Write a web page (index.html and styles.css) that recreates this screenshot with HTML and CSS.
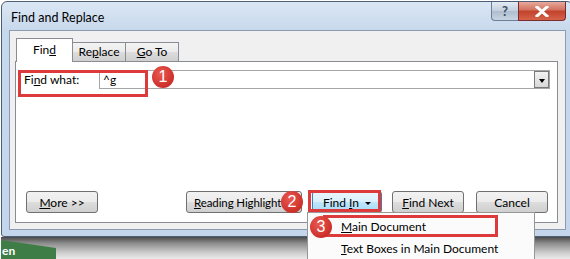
FILE: index.html
```html
<!DOCTYPE html>
<html>
<head>
    <meta charset="UTF-8">
    <title>Find and Replace</title>
    <link rel="stylesheet" href="styles.css">
</head>
<body>
    <div class="stage">
        <!-- Dialog window -->
        <div class="window">
            <div class="titlebar">
                <span class="title">Find and Replace</span>
                <div class="caption-buttons">
                    <span class="cap help">?</span>
                    <span class="cap close">
                        <svg width="14" height="11" viewBox="0 0 14 11">
                            <path d="M2 1 L12 10 M12 1 L2 10" stroke="#fff" stroke-width="3" stroke-linecap="square"/>
                        </svg>
                    </span>
                </div>
            </div>

            <div class="client">
                <!-- Tabs -->
                <div class="tabs">
                    <span class="tab active">Fin<u>d</u></span>
                    <span class="tab">Re<u>p</u>lace</span>
                    <span class="tab"><u>G</u>o To</span>
                </div>

                <div class="panel">
                    <div class="find-row">
                        <label class="label">Fi<u>n</u>d what:</label>
                        <div class="combo">
                            <span class="combo-text">^g</span>
                            <span class="combo-arrow"></span>
                        </div>
                    </div>

                    <div class="buttons">
                        <button type="button" class="btn more"><u>M</u>ore &gt;&gt;</button>
                        <button type="button" class="btn highlight"><u>R</u>eading Highlight</button>
                        <button type="button" class="btn find-in">Find <u>I</u>n <span class="caret"></span></button>
                        <button type="button" class="btn find-next"><u>F</u>ind Next</button>
                        <button type="button" class="btn cancel">Cancel</button>
                    </div>
                </div>
            </div>
        </div>

        <!-- Area below the dialog -->
        <div class="below">
            <span class="banner">en</span>
        </div>

        <!-- Dropdown menu of Find In -->
        <div class="menu">
            <div class="menu-item"><u>M</u>ain Document</div>
            <div class="menu-item"><u>T</u>ext Boxes in Main Document</div>
        </div>

        <!-- Annotations -->
        <div class="mark mark-find"></div>
        <div class="mark mark-findin"></div>
        <div class="mark mark-main"></div>
        <span class="step step-1">1</span>
        <span class="step step-2">2</span>
        <span class="step step-3">3</span>
    </div>
</body>
</html>
```

FILE: styles.css
```css
/* Find and Replace dialog */
body {
    margin: 0;
    background: #fff;
    font-family: Lato, "Open Sans", sans-serif;
    font-size: 12px;
    color: #000;
}

.stage {
    position: relative;
    width: 570px;
    height: 259px;
    overflow: hidden;
    padding: 1px 0 0 1px;
    box-sizing: border-box;
}

.window {
    width: 572px;
    border: 1px solid #4c5e75;
    border-radius: 6px 6px 3px 3px;
    background: linear-gradient(#dbe7f4, #c6d8ec 30px, #c3d6ec);
    box-sizing: border-box;
}

.titlebar {
    display: flex;
    height: 28px;
}

.title {
    padding: 8px 0 0 9px;
    font-size: 12.5px;
}

.caption-buttons {
    display: flex;
    margin-left: auto;
    margin-right: 6px;
    height: 19px;
}

.cap {
    display: flex;
    align-items: center;
    justify-content: center;
    border: 1px solid #6d7f96;
    border-top: none;
}

.help {
    width: 26px;
    border-radius: 0 0 0 4px;
    border-right: none;
    background: linear-gradient(#e3ebf4, #c3cfdd 50%, #aebdcf 51%, #c7d4e2);
    color: #3d4c60;
    font-weight: bold;
    font-size: 13px;
}

.close {
    width: 46px;
    border-radius: 0 0 4px 0;
    border-color: #7a2b2b;
    background: linear-gradient(#e9a99c, #d0715e 45%, #c2412c 50%, #d5634a);
}

.client {
    margin: 0 6px 6px 7px;
    border: 1px solid #8b9cb2;
    background: #f0f0f0;
    padding: 8px 7px 6px 5px;
    display: flex;
    flex-direction: column;
}

.tabs {
    display: flex;
    align-items: flex-end;
    height: 22px;
    padding-left: 1px;
}

.tab {
    width: 52px;
    height: 18px;
    border: 1px solid #898c95;
    border-bottom: none;
    border-left: none;
    background: linear-gradient(#f3f3f3, #ebebeb 50%, #dddddd 51%, #cfcfcf);
    text-align: center;
    line-height: 18px;
}

.tab.active {
    width: 55px;
    height: 23px;
    border-left: 1px solid #898c95;
    background: #fff;
    line-height: 22px;
    margin-bottom: -1px;
    position: relative;
    z-index: 1;
}

.panel {
    height: 162px;
    border: 1px solid #898c95;
    background: #fff;
    box-sizing: border-box;
    display: flex;
    flex-direction: column;
    justify-content: space-between;
    padding: 8px 7px 9px 8px;
}

.find-row {
    display: flex;
    align-items: center;
    height: 19px;
}

.label {
    width: 75px;
}

.combo {
    flex: 1;
    height: 19px;
    border: 1px solid #a5a5a5;
    box-sizing: border-box;
    display: flex;
    align-items: center;
}

.combo-text {
    flex: 1;
    padding-left: 3px;
}

.combo-arrow {
    width: 15px;
    height: 17px;
    box-sizing: border-box;
    border: 1px solid #7a7a7a;
    background: linear-gradient(#f2f2f2, #d8d8d8);
    position: relative;
}

.combo-arrow::after {
    content: "";
    position: absolute;
    left: 4px;
    top: 7px;
    border-left: 3px solid transparent;
    border-right: 3px solid transparent;
    border-top: 4px solid #000;
}

.buttons {
    display: flex;
    height: 22px;
    padding-left: 2px;
}

.btn {
    height: 22px;
    border: 1px solid #707070;
    border-radius: 3px;
    background: linear-gradient(#f2f2f2, #ebebeb 50%, #dddddd 51%, #cfcfcf);
    font-family: inherit;
    font-size: 12px;
    padding: 0;
    color: #000;
}

.more { width: 72px; }
.highlight {
    width: 116px;
    margin-left: 88px;
    text-align: left;
    padding-left: 7px;
    font-size: 11.5px;
    letter-spacing: -0.1px;
}
.find-in {
    width: 70px;
    margin-left: 10px;
    border-color: #3c7fb1;
    background: linear-gradient(#eaf6fd, #d9f0fc 50%, #bee6fd 51%, #a7d9f5);
}
.find-next { width: 72px; margin-left: 10px; }
.cancel { width: 72px; margin-left: 12px; }

.caret {
    display: inline-block;
    margin-left: 3px;
    vertical-align: middle;
    border-left: 3px solid transparent;
    border-right: 3px solid transparent;
    border-top: 3px solid #000;
}

.below {
    height: 30px;
    background: linear-gradient(#4a4a4a, #8a8a8a 6px, #cfcfcf 16px, #f4f4f4 24px);
    position: relative;
}

.banner {
    position: absolute;
    left: 0;
    top: 3px;
    width: 55px;
    height: 27px;
    background: #3f7d47;
    clip-path: polygon(0 0, 100% 30%, 100% 100%, 0 100%);
    color: #fff;
    font-weight: bold;
    font-size: 12px;
    padding: 3px 0 0 1px;
    box-sizing: border-box;
}

/* dropdown menu */
.menu {
    position: absolute;
    left: 307px;
    top: 212px;
    width: 228px;
    height: 60px;
    border: 1px solid #979797;
    background: #fbfbfb;
    box-sizing: border-box;
    padding-top: 3px;
}

.menu-item {
    height: 22px;
    line-height: 22px;
    padding-left: 33px;
}

/* red annotation boxes and numbered circles */
.mark {
    position: absolute;
    border: 3px solid #dd3b3b;
    box-sizing: border-box;
}

.mark-find { left: 18px; top: 70px; width: 130px; height: 27px; }
.mark-findin { left: 308px; top: 190px; width: 73px; height: 22px; }
.mark-main { left: 323px; top: 215px; width: 175px; height: 22px; }

.step {
    position: absolute;
    width: 22px;
    height: 22px;
    border-radius: 50%;
    background: radial-gradient(circle at 40% 35%, #ea5a52, #cc2f2a 70%);
    color: #fff;
    font-family: "Liberation Sans", sans-serif;
    font-size: 16px;
    line-height: 22px;
    text-align: center;
}

.step-1 { left: 152px; top: 66px; }
.step-2 { left: 281px; top: 191px; }
.step-3 { left: 310px; top: 216px; }
```
